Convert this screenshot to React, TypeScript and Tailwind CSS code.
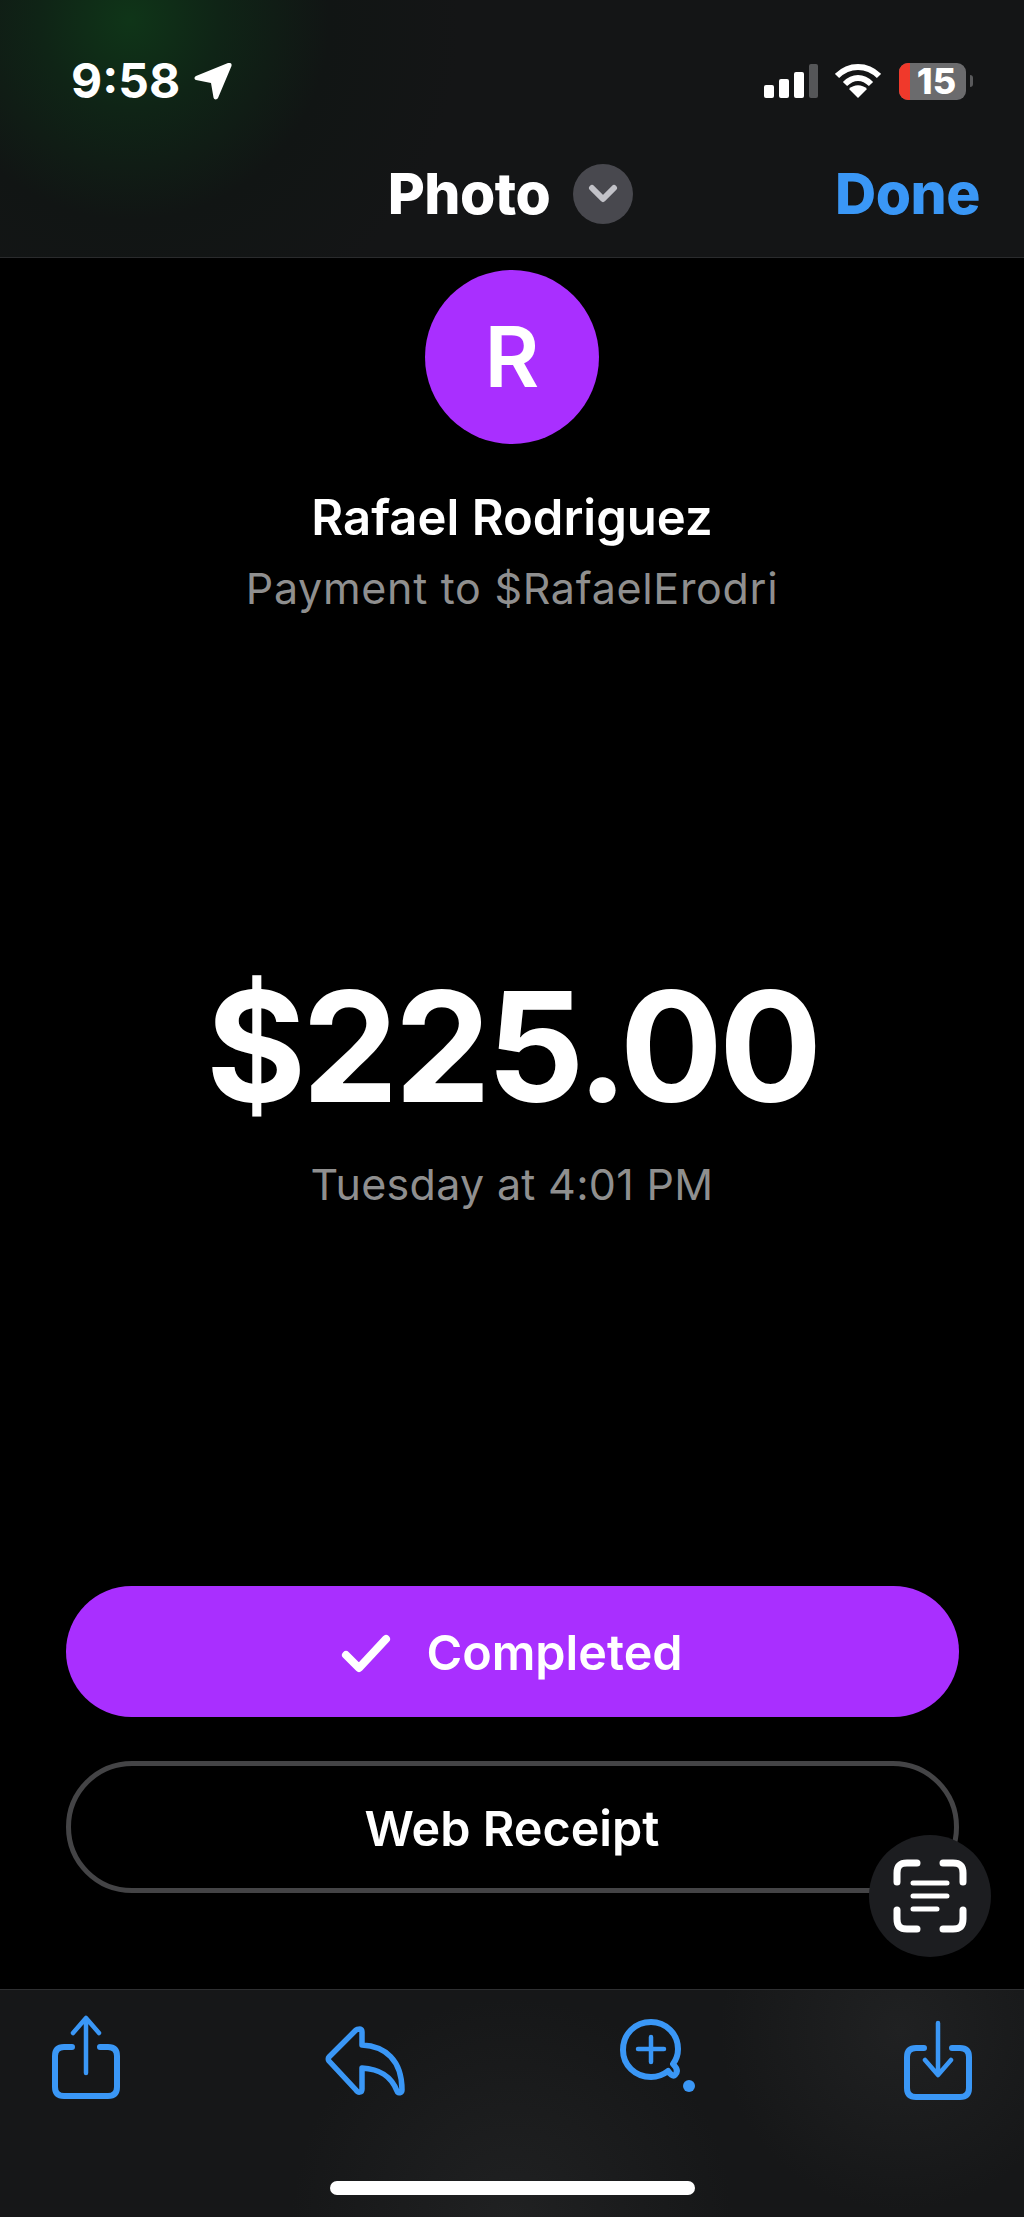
import React from "react";

const Blue = "#3a97f6";

function Share() {
  return (
    <svg width="68" height="84" viewBox="0 0 68 84" fill="none" stroke={Blue} strokeLinecap="round" strokeLinejoin="round">
      <path d="M20 32H12C6 32 3 35 3 41V72C3 78 6 81 12 81H56C62 81 65 78 65 72V41C65 35 62 32 56 32H48" strokeWidth="6" />
      <path d="M34 58V4M21 18L34 3L47 18" strokeWidth="4.5" />
    </svg>
  );
}
function Download() {
  return (
    <svg width="68" height="80" viewBox="0 0 68 80" fill="none" stroke={Blue} strokeLinecap="round" strokeLinejoin="round">
      <path d="M20 28H12C6 28 3 31 3 37V68C3 74 6 77 12 77H56C62 77 65 74 65 68V37C65 31 62 28 56 28H48" strokeWidth="6" />
      <path d="M34 3V54M21 40L34 55L47 40" strokeWidth="4.5" />
    </svg>
  );
}
function Reply() {
  return (
    <svg width="80" height="70" viewBox="0 0 80 70" fill="none" stroke={Blue} strokeWidth="5.5" strokeLinejoin="round" strokeLinecap="round">
      <path d="M35 3C36 3 37 4 37 6V19C60 20 77 34 77 64C77 67 73 68 72 65C66 50 55 43 37 42V63C37 67 33 67 31 64L4 35C3 34 3 32 4 31L31 4C32 3 34 3 35 3Z" />
    </svg>
  );
}
function Zoom() {
  return (
    <svg width="78" height="76" viewBox="0 0 78 76" fill="none" stroke={Blue} strokeLinecap="round">
      <path d="M49 53C44 57 38 59 32 59C16 59 4 47 4 32C4 16 16 4 32 4C47 4 59 16 59 31C59 37 57 42 54 46C57 49 60 53 56 57C54 59 51 56 49 53Z" strokeWidth="6" strokeLinejoin="round" />
      <path d="M32 19V44M19 31H45" strokeWidth="4.5" />
      <circle cx="70" cy="68" r="6" fill={Blue} stroke="none" />
    </svg>
  );
}
function Scan() {
  return (
    <svg width="74" height="74" viewBox="0 0 74 74" fill="none" stroke="#fff" strokeLinecap="round">
      <path d="M4 23V14C4 7 7 4 14 4H24M50 4H60C67 4 70 7 70 14V23M4 51V60C4 67 7 70 14 70H24M50 70H60C67 70 70 67 70 60V51" strokeWidth="7" />
      <path d="M20 24H54M20 37H54M20 50H44" strokeWidth="5" />
    </svg>
  );
}

function StatusIcons() {
  return (
    <div className="flex items-center">
      <div className="flex items-end gap-[5px] h-[34px]">
        <div className="w-[10px] h-[13px] rounded-[2px] bg-white" />
        <div className="w-[10px] h-[19px] rounded-[2px] bg-white" />
        <div className="w-[10px] h-[26px] rounded-[2px] bg-white" />
        <div className="w-[9px] h-[34px] rounded-[2px] bg-[#555658]" />
      </div>
      <svg className="ml-[17px]" width="46" height="34" viewBox="0 0 46 34" fill="none" stroke="#fff" strokeWidth="6">
        <path d="M2 12C14 0 32 0 44 12" />
        <path d="M10 20C18 12 28 12 36 20" />
        <path d="M23 34L14 25C19 20 27 20 32 25Z" fill="#fff" stroke="none" />
      </svg>
      <div className="ml-[18px] flex items-center">
        <div className="w-[67px] h-[37px] rounded-[9px] bg-[#6b6b6d] flex">
          <div className="w-[11px] rounded-l-[9px] bg-[#f0392b]" />
          <div className="flex-1 flex items-center justify-center text-white font-extrabold text-[36px] leading-none pr-[3px]">15</div>
        </div>
        <div className="ml-[4px] w-[3px] h-[12px] rounded-r-full bg-[#5a5a5c]" />
      </div>
    </div>
  );
}

export default function App() {
  return (
    <div className="relative w-[1024px] h-[2217px] bg-black text-white flex flex-col overflow-hidden font-['Inter',sans-serif]">
      <header className="h-[258px] shrink-0 border-b border-[#2a2b2d] bg-[radial-gradient(circle_at_130px_20px,#0f3518_0px,#0f2416_90px,#111514_200px,#141516_330px)] flex flex-col">
        <div className="flex items-center justify-between pl-[71px] pr-[51px] pt-[61px]">
          <div className="flex items-center gap-[14px]">
            <span className="text-[48px] leading-[40px] font-bold">9:58</span>
            <svg width="38" height="38" viewBox="0 0 38 38" fill="#fff">
              <path d="M36 1C37 1 38 2 37.5 4L24 36C23 38 20 38 19.5 35.5L17 21L2 18C0 17.5 0 15 2 14L34 1Z" />
            </svg>
          </div>
          <StatusIcons />
        </div>
        <div className="grid grid-cols-[1fr_auto_1fr] items-center pl-[46px] pr-[44px] pt-[63px]">
          <div />
          <div className="flex items-center gap-[23px] -ml-[5px]">
            <span className="text-[57px] leading-[60px] font-extrabold tracking-[-0.5px]">Photo</span>
            <div className="w-[60px] h-[60px] rounded-full bg-[#48484e] flex items-center justify-center">
              <svg width="30" height="20" viewBox="0 0 30 20" fill="none" stroke="#c2c2c8" strokeWidth="6" strokeLinecap="round" strokeLinejoin="round">
                <path d="M4 4L15 15L26 4" />
              </svg>
            </div>
          </div>
          <span className="justify-self-end text-[57px] leading-[60px] font-extrabold tracking-[-0.5px] text-[#3a97f6]">Done</span>
        </div>
      </header>

      <main className="flex-1 flex flex-col items-center">
        <div className="mt-[12px] w-[174px] h-[174px] rounded-full bg-[#a92fff] flex items-center justify-center text-[84px] font-semibold leading-none">R</div>
        <div className="mt-[46px] text-[49px] leading-[56px] font-semibold">Rafael Rodriguez</div>
        <div className="mt-[14px] text-[43px] leading-[56px] text-[#8f8f8f] tracking-[0.7px]">Payment to $RafaelErodri</div>
        <div className="mt-[341px] text-[153px] leading-[180px] font-bold tracking-[-4px]">$225.00</div>
        <div className="mt-[19px] text-[43px] leading-[56px] text-[#8f8f8f] tracking-[0.3px]">Tuesday at 4:01 PM</div>
        <button className="mt-[374px] w-[893px] h-[131px] pt-[4px] rounded-full bg-[#a92fff] flex items-center justify-center gap-[35px] text-[48.5px] font-semibold">
          <svg width="50" height="40" viewBox="0 0 50 40" fill="none" stroke="#fff" strokeWidth="8" strokeLinecap="round" strokeLinejoin="round">
            <path d="M5 21L18 34L45 5" />
          </svg>
          Completed
        </button>
        <button className="mt-[44px] w-[893px] h-[132px] pt-[4px] rounded-full border-[5px] border-[#444446] flex items-center justify-center text-[48.5px] font-semibold">Web Receipt</button>
      </main>

      <button className="absolute left-[869px] top-[1835px] w-[122px] h-[122px] rounded-full bg-[#1c1d20] flex items-center justify-center">
        <Scan />
      </button>

      <footer className="h-[228px] shrink-0 border-t border-[#2e2f31] bg-[radial-gradient(circle_at_900px_40px,#202122_0px,rgba(22,23,24,0)_180px),radial-gradient(circle_at_512px_228px,#202122_0px,#161718_220px)] flex flex-col">
        <div className="h-[110px] flex items-start justify-between pl-[52px] pr-[52px]">
          <div className="mt-[25px]"><Share /></div>
          <div className="mt-[36px] -ml-[2px]"><Reply /></div>
          <div className="mt-[28px] ml-[6px]"><Zoom /></div>
          <div className="mt-[30px]"><Download /></div>
        </div>
        <div className="flex justify-center mt-[81px]">
          <div className="w-[365px] h-[14px] rounded-full bg-white" />
        </div>
      </footer>
    </div>
  );
}
